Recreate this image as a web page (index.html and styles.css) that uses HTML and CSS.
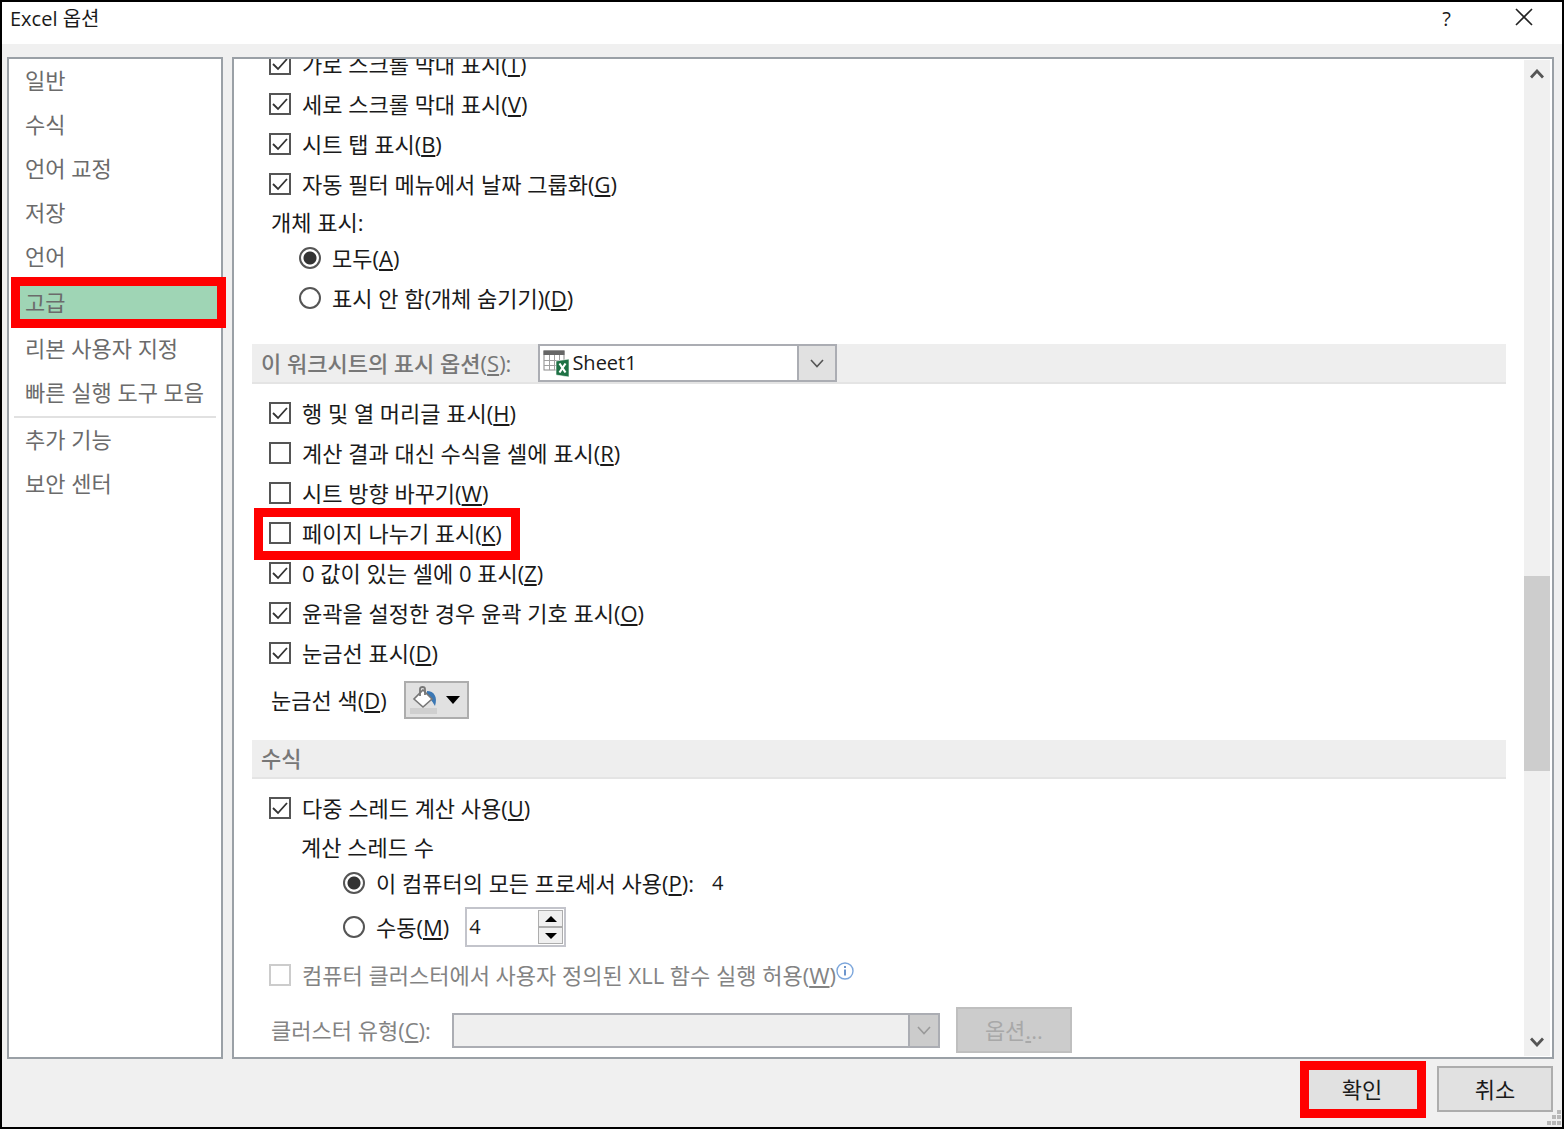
FILE: index.html
```
<!DOCTYPE html>
<html lang="ko">

<head>
    <meta charset="UTF-8">
    <title>Excel 옵션</title>
    <link rel="stylesheet" href="styles.css">
</head>

<body>
    <div class="window">
        <header class="titlebar">
            <h1>Excel 옵션</h1>
            <button class="title-button" aria-label="도움말">?</button>
            <button class="title-button" aria-label="닫기">
                <svg width="18" height="18" viewBox="0 0 18 18"><path d="M1 1L17 17M17 1L1 17" stroke="#222" stroke-width="1.6" fill="none"/></svg>
            </button>
        </header>

        <main class="panels">
            <nav class="sidebar">
                <a href="#">일반</a>
                <a href="#">수식</a>
                <a href="#">언어 교정</a>
                <a href="#">저장</a>
                <a href="#">언어</a>
                <a href="#" class="selected marked">고급</a>
                <a href="#">리본 사용자 지정</a>
                <a href="#">빠른 실행 도구 모음</a>
                <hr>
                <a href="#">추가 기능</a>
                <a href="#">보안 센터</a>
            </nav>

            <section class="content">
                <form class="options">
                    <div class="row"><label><input type="checkbox" checked>가로 스크롤 막대 표시(<u>T</u>)</label></div>
                    <div class="row"><label><input type="checkbox" checked>세로 스크롤 막대 표시(<u>V</u>)</label></div>
                    <div class="row"><label><input type="checkbox" checked>시트 탭 표시(<u>B</u>)</label></div>
                    <div class="row"><label><input type="checkbox" checked>자동 필터 메뉴에서 날짜 그룹화(<u>G</u>)</label></div>
                    <p class="caption">개체 표시:</p>
                    <div class="row indent"><label><input type="radio" name="objects" checked>모두(<u>A</u>)</label></div>
                    <div class="row indent"><label><input type="radio" name="objects">표시 안 함(개체 숨기기)(<u>D</u>)</label></div>

                    <div class="section sheet-section">
                        <label for="sheet">이 워크시트의 표시 옵션(<u>S</u>):</label>
                        <div class="combo sheet-combo">
                            <svg class="sheet-icon" width="28" height="28" viewBox="0 0 28 28">
                                <rect x="2" y="2" width="20" height="19" fill="#fff" stroke="#8a8a8a"/>
                                <path d="M2 11.500H22M2 16.500H22M7.500 6V21M12.500 6V21M17.500 6V21" stroke="#a0a0a0"/>
                                <rect x="1.500" y="1.500" width="21" height="4.500" fill="#666"/>
                                <path d="M14 12L27 10V28L14 26Z" fill="#1e7145" stroke="#fff" stroke-width=".6"/>
                                <path d="M17.500 14.500L23.500 23.500M23.500 14.500L17.500 23.500" stroke="#fff" stroke-width="2.200"/>
                            </svg>
                            <select id="sheet"><option>Sheet1</option></select>
                            <span class="combo-arrow"><svg width="14" height="9" viewBox="0 0 14 9"><path d="M1 1L7 7.500L13 1" stroke="#555" stroke-width="1.600" fill="none"/></svg></span>
                        </div>
                    </div>

                    <div class="row"><label><input type="checkbox" checked>행 및 열 머리글 표시(<u>H</u>)</label></div>
                    <div class="row"><label><input type="checkbox">계산 결과 대신 수식을 셀에 표시(<u>R</u>)</label></div>
                    <div class="row"><label><input type="checkbox">시트 방향 바꾸기(<u>W</u>)</label></div>
                    <div class="row"><label class="marked"><input type="checkbox">페이지 나누기 표시(<u>K</u>)</label></div>
                    <div class="row"><label><input type="checkbox" checked>0 값이 있는 셀에 0 표시(<u>Z</u>)</label></div>
                    <div class="row"><label><input type="checkbox" checked>윤곽을 설정한 경우 윤곽 기호 표시(<u>O</u>)</label></div>
                    <div class="row"><label><input type="checkbox" checked>눈금선 표시(<u>D</u>)</label></div>
                    <div class="row color-row">
                        <label for="gridColor">눈금선 색(<u>D</u>)</label>
                        <button type="button" id="gridColor" class="color-button">
                            <svg width="28" height="28" viewBox="0 0 28 28">
                                <rect x="0" y="22" width="27" height="6" fill="#cfcfcf"/>
                                <path d="M17 5C24 5 28 11 25 20C23 17 22 14 17 10Z" fill="#3c78b4"/>
                                <path d="M13 4L22 13L13 21L4 13Z" fill="#fff" stroke="#777" stroke-width="1.600"/>
                                <path d="M10 10V3Q10 1 12.500 1Q15 1 15 3V9" fill="none" stroke="#777" stroke-width="1.800"/>
                            </svg>
                            <svg width="14" height="8" viewBox="0 0 14 8"><path d="M0 0H14L7 8Z" fill="#000"/></svg>
                        </button>
                    </div>

                    <div class="section">수식</div>

                    <div class="row"><label><input type="checkbox" checked>다중 스레드 계산 사용(<u>U</u>)</label></div>
                    <p class="caption thread-caption">계산 스레드 수</p>
                    <div class="row indent-more"><label><input type="radio" name="threads" checked>이 컴퓨터의 모든 프로세서 사용(<u>P</u>):</label><span class="cpu-count">4</span></div>
                    <div class="row indent-more manual-row">
                        <label><input type="radio" name="threads">수동(<u>M</u>)</label>
                        <div class="spinner">
                            <input type="text" value="4" aria-label="계산 스레드 수">
                            <div class="spinner-buttons">
                                <button type="button" aria-label="증가"><svg width="12" height="6" viewBox="0 0 12 6"><path d="M0 6L6 0L12 6Z"/></svg></button>
                                <button type="button" aria-label="감소"><svg width="12" height="6" viewBox="0 0 12 6"><path d="M0 0L6 6L12 0Z"/></svg></button>
                            </div>
                        </div>
                    </div>
                    <div class="row disabled xll-row">
                        <label><input type="checkbox" disabled>컴퓨터 클러스터에서 사용자 정의된 XLL 함수 실행 허용(<u>W</u>)</label>
                        <svg class="info" width="18" height="18" viewBox="0 0 18 18"><circle cx="9" cy="9" r="8" fill="#fff" stroke="#7da7dc" stroke-width="1.400"/><path d="M9 7.500V13.500M9 4V6" stroke="#4a7cc0" stroke-width="1.600"/></svg>
                    </div>
                    <div class="row disabled cluster-row">
                        <label for="cluster">클러스터 유형(<u>C</u>):</label>
                        <div class="combo cluster-combo">
                            <select id="cluster" disabled></select>
                            <span class="combo-arrow"><svg width="14" height="9" viewBox="0 0 14 9"><path d="M1 1L7 7.500L13 1" stroke="#999" stroke-width="1.600" fill="none"/></svg></span>
                        </div>
                        <button type="button" class="push-button" disabled>옵션<u>.</u>..</button>
                    </div>
                </form>

                <div class="scrollbar">
                    <button type="button" aria-label="위로"><svg width="14" height="10" viewBox="0 0 14 10"><path d="M1 8.500L7 2L13 8.500" stroke="#555" stroke-width="2.800" fill="none"/></svg></button>
                    <div class="track"><div class="thumb"></div></div>
                    <button type="button" aria-label="아래로"><svg width="14" height="10" viewBox="0 0 14 10"><path d="M1 1.500L7 8L13 1.500" stroke="#555" stroke-width="2.800" fill="none"/></svg></button>
                </div>
            </section>
        </main>

        <footer class="footer">
            <button class="push-button marked">확인</button>
            <button class="push-button">취소</button>
            <svg class="grip" width="16" height="16" viewBox="0 0 16 16" fill="#b8b8b8"><path d="M11 0h4v4h-4zM6 5h4v4H6zM11 5h4v4h-4zM1 11h4v4H1zM6 11h4v4H6zM11 11h4v4h-4z"/></svg>
        </footer>
    </div>
</body>

</html>
```
FILE: styles.css
```
* {
    box-sizing: border-box;
}

body {
    margin: 0;
    font-family: "Open Sans", "Noto Sans CJK KR", sans-serif;
    font-size: 22px;
    line-height: 30px;
    color: #1a1a1a;
}

button, input, select {
    margin: 0;
    font: inherit;
    color: inherit;
}

u {
    text-decoration-thickness: 2px;
    text-underline-offset: 2px;
}

.window {
    display: flex;
    flex-direction: column;
    height: 100vh;
    border: 2px solid #000;
    background-color: #f0f0f0;
}

.titlebar {
    display: flex;
    align-items: center;
    height: 42px;
    padding: 0 0 8px 8px;
    background-color: #fff;
}

.titlebar h1 {
    flex: 1;
    margin: 0;
    font-size: 20px;
    font-weight: normal;
}

.title-button {
    width: 77px;
    padding: 0;
    border: none;
    background: none;
    font-size: 20px;
}

.panels {
    display: flex;
    flex: 1;
    gap: 9px;
    min-height: 0;
    padding: 13px 8px 0 5px;
}

.sidebar,
.content {
    border: 2px solid #9aa0a6;
    background-color: #fff;
}

.sidebar {
    width: 216px;
    flex-shrink: 0;
}

.sidebar a {
    display: flex;
    align-items: center;
    height: 44px;
    padding: 0 0 2px 16px;
    color: #6b6b6b;
    text-decoration: none;
    white-space: nowrap;
}

.sidebar a.selected {
    height: 48px;
    margin: 0 2px;
    padding-left: 14px;
    background-color: #9fd5b5;
}

.sidebar hr {
    margin: 1px 5px 0;
    border: none;
    border-top: 2px solid #e1e1e1;
}

/* red callout frames */
.marked {
    position: relative;
}

.marked::after {
    content: "";
    position: absolute;
    inset: -7px -8px -8px -6px;
    border: 9px solid #f00;
    pointer-events: none;
}

.sidebar .marked::after {
    inset: -2px -7px -1px 0;
}

.row .marked::after {
    inset: -10px -18px -12px -15px;
}

.content {
    display: flex;
    flex: 1;
    min-width: 0;
    overflow: hidden;
}

/* the list is scrolled part of the way down its first row */
.options {
    flex: 1;
    min-width: 0;
    margin-top: -15px;
    padding: 0 18px;
}

.row {
    display: flex;
    align-items: center;
    height: 40px;
    padding-left: 17px;
    white-space: nowrap;
}

.row label {
    display: flex;
    align-items: center;
}

.indent {
    padding-left: 47px;
}

.indent-more {
    padding-left: 91px;
}

.caption {
    margin: 0;
    padding: 3px 0 1px 19px;
}

.thread-caption {
    padding-top: 4px;
    padding-left: 49px;
}

input[type="checkbox"],
input[type="radio"] {
    appearance: none;
    width: 22px;
    height: 22px;
    margin-right: 11px;
    border: 2px solid #555;
    background-color: #fff;
}

input[type="checkbox"]:checked {
    background-image: url("data:image/svg+xml,%3Csvg xmlns='http://www.w3.org/2000/svg' viewBox='0 0 18 18'%3E%3Cpath d='M2 9L7 14L16 4' fill='none' stroke='%23333' stroke-width='1.800'/%3E%3C/svg%3E");
}

input[type="radio"] {
    border-radius: 50%;
}

input[type="radio"]:checked {
    background-image: radial-gradient(circle, #333 0 6px, #fff 7px);
}

input[type="checkbox"]:disabled {
    border-color: #ccc;
}

.section {
    display: flex;
    align-items: center;
    height: 39px;
    margin: 13px 0 9px;
    padding: 0 0 2px 9px;
    border-bottom: 2px solid #e4e4e4;
    background-color: #eee;
    font-weight: 500;
    color: #777;
}

.sheet-section {
    height: 40px;
    margin-top: 26px;
    padding-bottom: 0;
}

.combo {
    position: relative;
    height: 38px;
    border: 2px solid #abadb3;
    background-color: #fff;
}

.combo select {
    appearance: none;
    width: 100%;
    height: 100%;
    padding: 0 32px;
    border: none;
    border-radius: 0;
    background: none;
    font-size: 20px;
    font-weight: normal;
    color: #1a1a1a;
}

.combo-arrow {
    display: flex;
    align-items: center;
    justify-content: center;
    position: absolute;
    inset: 0 0 0 auto;
    width: 38px;
    border-left: 2px solid #abadb3;
    background-color: #e1e1e1;
    pointer-events: none;
}

.sheet-combo {
    width: 299px;
    margin-left: 27px;
}

.sheet-icon {
    position: absolute;
    top: 3px;
    left: 2px;
}

.color-row {
    height: 54px;
    padding-left: 19px;
    gap: 17px;
}

.color-button {
    display: flex;
    align-items: center;
    gap: 8px;
    width: 65px;
    height: 38px;
    padding: 0 4px;
    border: 2px solid #adadad;
    background-color: #e1e1e1;
}

.cpu-count {
    margin-left: 18px;
    font-size: 20px;
}

.manual-row {
    height: 48px;
    gap: 16px;
}

.spinner {
    display: flex;
    width: 101px;
    height: 40px;
    border: 2px solid #c3c4cb;
    background-color: #fff;
}

.spinner input {
    flex: 1;
    min-width: 0;
    padding: 0 2px;
    border: none;
    background: none;
    font-size: 20px;
}

.spinner-buttons {
    display: flex;
    flex-direction: column;
    width: 27px;
    padding: 1px;
}

.spinner-buttons button {
    display: flex;
    flex: 1;
    align-items: center;
    justify-content: center;
    padding: 0;
    border: 1px solid #adadad;
    background-color: #f0f0f0;
}

.disabled {
    color: #838383;
}

.xll-row {
    margin-top: 4px;
}

.info {
    margin-bottom: 8px;
}

.cluster-row {
    height: 46px;
    margin-top: 12px;
    padding-left: 19px;
}

.cluster-combo {
    width: 488px;
    height: 35px;
    margin: 0 16px 0 21px;
    background-color: #efefef;
}

.cluster-combo .combo-arrow {
    width: 30px;
    background-color: #ccc;
}

.push-button {
    width: 116px;
    height: 46px;
    padding: 0;
    border: 2px solid #adadad;
    background-color: #e1e1e1;
}

.push-button:disabled {
    border-color: #bfbfbf;
    background-color: #ccc;
    color: #a8a8a8;
}

.scrollbar {
    display: flex;
    flex-direction: column;
    width: 26px;
    margin: 1px 2px 1px 0;
    background-color: #f0f0f0;
}

.scrollbar button {
    height: 28px;
    padding: 0 0 4px;
    border: none;
    background: none;
    line-height: 10px;
}

.track {
    display: flex;
    flex: 1;
    flex-direction: column;
}

.track::before {
    content: "";
    flex: 489;
}

.track::after {
    content: "";
    flex: 257;
}

.thumb {
    flex: 195;
    background-color: #cdcdcd;
}

.footer {
    display: flex;
    justify-content: flex-end;
    gap: 17px;
    position: relative;
    padding: 7px 9px 15px;
}

.grip {
    position: absolute;
    right: 0;
    bottom: 1px;
}
```
